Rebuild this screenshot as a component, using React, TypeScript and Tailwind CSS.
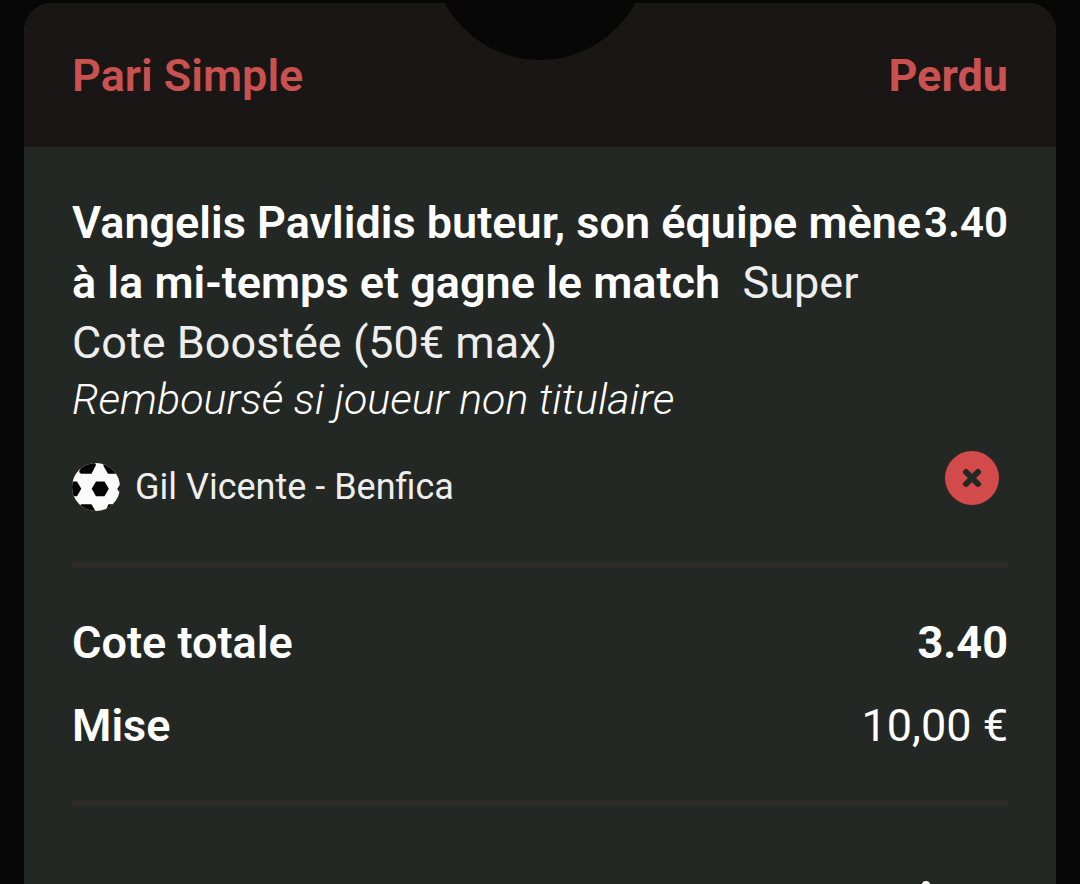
import type { ReactNode } from "react";

function FootballIcon() {
  return (
    <svg viewBox="0 0 48 48" className="size-12 shrink-0" aria-hidden="true">
      <defs>
        <clipPath id="ball">
          <circle cx="24" cy="24" r="24" />
        </clipPath>
      </defs>
      <g clipPath="url(#ball)">
        <rect width="48" height="48" fill="#fafafa" />
        <g fill="#050505">
          <path d="M24 18.500h8.500l4.300 7.300-4.300 7.500H24l-4.300-7.500z" />
          <path d="M-3 18.500h8l4.300 7.300-4.300 7.500h-8z" />
          <path d="M7 9 12-2h10l2 4-4.500 8.700H9z" />
          <path d="M31-2h16v12.700H36L31.500 3z" />
          <path d="M45.300 26 49 20v12z" />
          <path d="M9 41.300h10.500L24 49H6z" />
          <path d="M36.500 41.300H46V49H33z" />
        </g>
      </g>
    </svg>
  );
}

function LostIcon() {
  return (
    <svg viewBox="0 0 54 54" className="size-[54px]" role="img" aria-label="Perdu">
      <circle cx="27" cy="27" r="27" fill="#d24b4a" />
      <path d="m21 21 12 12M33 21 21 33" stroke="#242825" strokeWidth="6" strokeLinecap="round" />
    </svg>
  );
}

function SummaryRow({ label, children }: { label: string; children: ReactNode }) {
  return (
    <div className="flex justify-between text-[45px] leading-[60px]">
      <dt className="font-semibold">{label}</dt>
      <dd>{children}</dd>
    </div>
  );
}

export default function App() {
  return (
    <main className="h-screen overflow-hidden bg-[#070707] px-6 pt-[3px] font-['Roboto',sans-serif] text-white">
      <article className="relative flex min-h-full flex-col overflow-hidden rounded-t-[28px] bg-[#242825]">
        <div className="absolute -top-[159px] left-1/2 size-[216px] -translate-x-1/2 rounded-full bg-[#070707]" />

        <header className="flex justify-between bg-[#1a1615] px-12 pt-[43px] pb-[41px] text-[45px] leading-[60px] text-[#c95150]">
          <h1 className="font-semibold">Pari Simple</h1>
          <p className="font-bold">Perdu</p>
        </header>

        <div className="px-12 pt-[46px]">
          <section>
            <div className="flex justify-between">
              <div className="min-w-0 flex-1">
                <p className="text-[45px] leading-[60px] text-[#eeeeee]">
                  <strong className="font-semibold text-white">
                    Vangelis Pavlidis buteur, son équipe mène à la mi-temps et gagne le match
                  </strong>
                  &nbsp; Super Cote Boostée (50€ max)
                </p>
                <p className="text-[43px] leading-[52px] font-light italic">Remboursé si joueur non titulaire</p>
              </div>
              <span className="text-[42px] leading-[60px] font-semibold">3.40</span>
            </div>

            <div className="mt-[26px] flex items-start justify-between pr-[9px]">
              <div className="mt-3 flex items-center gap-[15px] text-[36px] leading-[48px] text-[#eeeeee]">
                <FootballIcon />
                <span>Gil Vicente - Benfica</span>
              </div>
              <LostIcon />
            </div>
          </section>

          <hr className="mt-[51px] border-t-[6px] border-[#2e2b29]" />

          <dl className="flex flex-col gap-[23px] pt-[45px] pb-11">
            <SummaryRow label="Cote totale">
              <span className="font-bold">3.40</span>
            </SummaryRow>
            <SummaryRow label="Mise">10,00 €</SummaryRow>
          </dl>

          <hr className="border-t-[6px] border-[#2e2b29]" />

          <div className="flex justify-end pt-[75px] pr-[78px]">
            <span className="size-2 rounded-full bg-white" />
          </div>
        </div>
      </article>
    </main>
  );
}
